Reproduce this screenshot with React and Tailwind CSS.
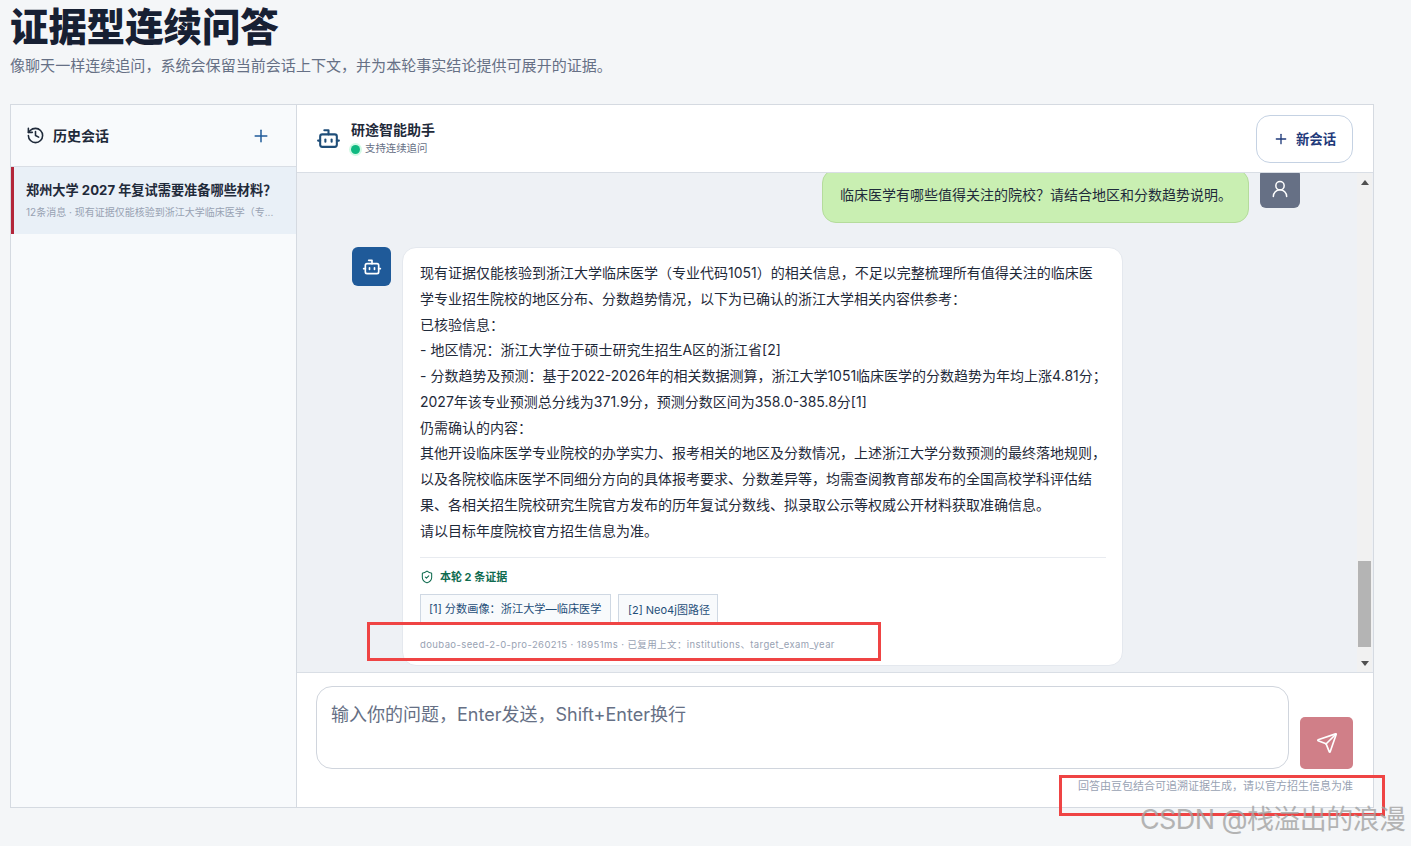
import { Bot, History, Plus, Send, ShieldCheck, UserRound } from 'lucide-react'

// one entry per visual line, the wrap points of the answer are fixed
const ANSWER = [
  '现有证据仅能核验到浙江大学临床医学（专业代码1051）的相关信息，不足以完整梳理所有值得关注的临床医',
  '学专业招生院校的地区分布、分数趋势情况，以下为已确认的浙江大学相关内容供参考：',
  '已核验信息：',
  '- 地区情况：浙江大学位于硕士研究生招生A区的浙江省[2]',
  '- 分数趋势及预测：基于2022-2026年的相关数据测算，浙江大学1051临床医学的分数趋势为年均上涨4.81分；',
  '2027年该专业预测总分线为371.9分，预测分数区间为358.0-385.8分[1]',
  '仍需确认的内容：',
  '其他开设临床医学专业院校的办学实力、报考相关的地区及分数情况，上述浙江大学分数预测的最终落地规则，',
  '以及各院校临床医学不同细分方向的具体报考要求、分数差异等，均需查阅教育部发布的全国高校学科评估结',
  '果、各相关招生院校研究生院官方发布的历年复试分数线、拟录取公示等权威公开材料获取准确信息。',
  '请以目标年度院校官方招生信息为准。',
]

function Sidebar() {
  return (
    <aside className="w-[286px] shrink-0 bg-[#f8fafc] border-r border-[#d5dae1]">
      <div className="h-[62px] flex items-center justify-between pl-[15px] pr-[25px] border-b border-[#d9dee5]">
        <div className="flex items-center gap-[8px] text-[#1f2a3a]">
          <History className="w-[19px] h-[19px]" strokeWidth={2} />
          <span className="text-[14px] font-bold">历史会话</span>
        </div>
        <Plus className="w-[20px] h-[20px] text-[#1f5a99]" strokeWidth={1.8} />
      </div>
      <div className="h-[67px] bg-[#e9f0f7] border-l-[3px] border-[#b3263a] pl-[12px] pr-[20px] pt-[14px]">
        <p className="text-[13.2px] leading-[18px] font-bold text-[#1f2a3a] whitespace-nowrap">郑州大学 2027 年复试需要准备哪些材料？</p>
        <p className="mt-[6px] text-[10px] leading-[14px] text-[#98a2b3] whitespace-nowrap">12条消息 · 现有证据仅能核验到浙江大学临床医学（专...</p>
      </div>
    </aside>
  )
}

function ChatHeader() {
  return (
    <div className="h-[68px] shrink-0 bg-white border-b border-[#d9dee5] flex items-center justify-between pl-[19px] pr-[20px]">
      <div className="flex items-center gap-[10px]">
        <Bot className="w-[25px] h-[25px] text-[#1f4e79]" strokeWidth={2} />
        <div>
          <p className="text-[14px] leading-[18px] font-bold text-[#1f2a3a]">研途智能助手</p>
          <div className="flex items-center gap-[5px] mt-[3px]">
            <span className="w-[9px] h-[9px] rounded-full bg-[#10b981] ring-2 ring-[#d1fae5]" />
            <span className="text-[10.4px] leading-[14px] text-[#667085]">支持连续追问</span>
          </div>
        </div>
      </div>
      <button className="w-[97px] h-[48px] rounded-[14px] border border-[#c5d2e3] bg-white flex items-center justify-center gap-[7px] text-[#1f3a7a]">
        <Plus className="w-[16px] h-[16px]" strokeWidth={2} />
        <span className="text-[13.4px] font-bold pt-px">新会话</span>
      </button>
    </div>
  )
}

function Messages() {
  return (
    <div className="flex-1 min-h-0 flex bg-[#eef1f5]">
      <div className="flex-1 min-w-0 overflow-hidden flex flex-col justify-end pb-[6px] pl-[55px] pr-[57px]">
        <div className="flex justify-end gap-[11px] shrink-0 mb-[24px]">
          <div className="w-[427px] h-[54px] pl-[17px] pb-[4px] flex items-center bg-[#c9efb2] border border-[#b5dc9c] rounded-[14px] text-[14px] text-[#1f2a3a]">
            临床医学有哪些值得关注的院校？请结合地区和分数趋势说明。
          </div>
          <div className="w-[40px] h-[39px] rounded-[6px] bg-[#667085] flex items-center justify-center text-white">
            <UserRound className="w-[20px] h-[20px]" strokeWidth={1.8} />
          </div>
        </div>

        <div className="flex gap-[11px] shrink-0">
          <div className="w-[39px] h-[39px] rounded-[6px] bg-[#1f5a99] flex items-center justify-center text-white">
            <Bot className="w-[20px] h-[20px]" strokeWidth={2} />
          </div>
          <div className="w-[721px] h-[419px] bg-white rounded-[14px] border border-[#e4e8ee] pl-[17px] pr-[16px] pt-[12px]">
            <div className="text-[14px] leading-[25.75px] text-[#1f2a3a] whitespace-nowrap">
              {ANSWER.map(line => <p key={line}>{line}</p>)}
            </div>
            <div className="mt-[14px] border-t border-[#e8ebf0] pt-[11px]">
              <div className="flex items-center gap-[6px] text-[#0f6b4f]">
                <ShieldCheck className="w-[14px] h-[14px]" strokeWidth={1.8} />
                <span className="text-[11px] leading-[16px] font-bold">本轮 2 条证据</span>
              </div>
              <div className="flex gap-[7px] mt-[9px]">
                <span className="h-[31px] w-[191px] pl-[8px] flex items-center bg-[#f8fafc] border border-[#cfd8e3] text-[11.2px] text-[#1f4e79]">[1] 分数画像：浙江大学—临床医学</span>
                <span className="h-[31px] w-[100px] pl-[9px] flex items-center bg-[#f8fafc] border border-[#cfd8e3] text-[11px] text-[#1f4e79]">[2] Neo4j图路径</span>
              </div>
              <p className="mt-[13px] text-[9.5px] tracking-[0.4px] leading-[14px] text-[#98a2b3]">doubao-seed-2-0-pro-260215 · 18951ms · 已复用上文：institutions、target_exam_year</p>
            </div>
          </div>
        </div>
      </div>

      {/* scrollbar */}
      <div className="w-[15px] shrink-0 bg-[#f1f1f1] flex flex-col items-center mr-px">
        <div className="h-[19px] flex items-center justify-center">
          <div className="w-0 h-0 border-x-[4px] border-x-transparent border-b-[5px] border-b-[#505050]" />
        </div>
        <div className="flex-1 w-full flex flex-col items-center justify-end pb-[8px]">
          <div className="h-[86px] w-[13px] bg-[#b4b4b4]" />
        </div>
        <div className="h-[17px] flex items-center justify-center">
          <div className="w-0 h-0 border-x-[4px] border-x-transparent border-t-[5px] border-t-[#505050]" />
        </div>
      </div>
    </div>
  )
}

function Composer() {
  return (
    <div className="h-[135px] shrink-0 bg-white border-t border-[#d9dee5] pt-[13px] pl-[19px] pr-[20px]">
      <div className="flex items-end gap-[11px]">
        <div className="flex-1 h-[83px] rounded-[16px] border border-[#d0d5dd] pl-[14px] pt-[14px] text-[18px] leading-[28px] text-[#667085]">
          输入你的问题，Enter发送，Shift+Enter换行
        </div>
        <button className="w-[53px] h-[52px] rounded-[5px] bg-[#d07f88] flex items-center justify-center text-white">
          <Send className="w-[22px] h-[22px]" strokeWidth={1.8} />
        </button>
      </div>
      <p className="mt-[10px] text-right text-[11px] leading-[14px] text-[#98a2b3]">回答由豆包结合可追溯证据生成，请以官方招生信息为准</p>
    </div>
  )
}

export default function App() {
  return (
    <div className="relative h-[846px] overflow-hidden bg-[#f4f6f8] font-['Inter','Noto_Sans_CJK_SC',sans-serif] pl-[10px]">
      <div className="h-[104px] pt-[4px]">
        <h1 className="text-[38.4px] leading-[46px] font-black text-[#172033]">证据型连续问答</h1>
        <p className="mt-[5px] text-[15.05px] leading-[22px] text-[#667085]">像聊天一样连续追问，系统会保留当前会话上下文，并为本轮事实结论提供可展开的证据。</p>
      </div>

      <div className="w-[1364px] h-[704px] flex border border-[#d5dae1] bg-white">
        <Sidebar />
        <div className="flex-1 min-w-0 flex flex-col">
          <ChatHeader />
          <Messages />
          <Composer />
        </div>
      </div>

      {/* annotation boxes and watermark sit on top of the page */}
      <div className="absolute left-[367px] top-[622px] w-[514px] h-[39px] border-[3px] border-[#ef4444]" />
      <div className="absolute left-[1059px] top-[775px] w-[326px] h-[41px] border-[3px] border-[#ef4444]" />
      <div className="absolute left-[1140px] top-[804px] text-[27px] leading-[32px] tracking-[-0.6px] whitespace-nowrap text-[#a3a3a3] opacity-80">CSDN @栈溢出的浪漫</div>
    </div>
  )
}
